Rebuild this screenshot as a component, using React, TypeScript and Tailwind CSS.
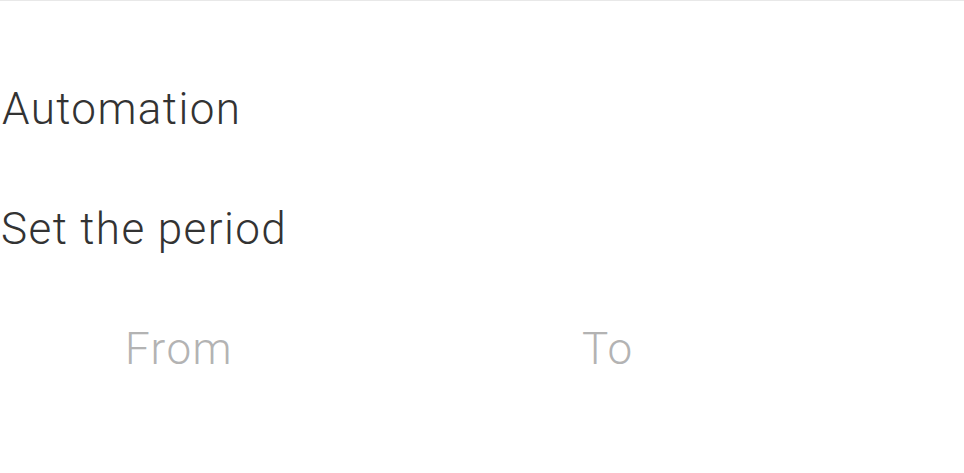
import React from "react";

export default function App() {
  return (
    <div
      className="w-[964px] h-[473px] bg-white overflow-hidden border-t border-[#e8e8e8]"
      style={{ fontFamily: "Roboto, 'Liberation Sans', sans-serif" }}
    >
      <div className="pt-[48px] text-[44px] font-light leading-[120px] tracking-[1.4px]">
        <h1 className="pl-[2px] text-[#333333] font-light">Automation</h1>
        <h2 className="pl-[1px] text-[#333333] font-light">Set the period</h2>
        <div className="flex pl-[125px] text-[#b3b3b3]">
          <div className="w-[457px] shrink-0">From</div>
          <div>To</div>
        </div>
      </div>
    </div>
  );
}
